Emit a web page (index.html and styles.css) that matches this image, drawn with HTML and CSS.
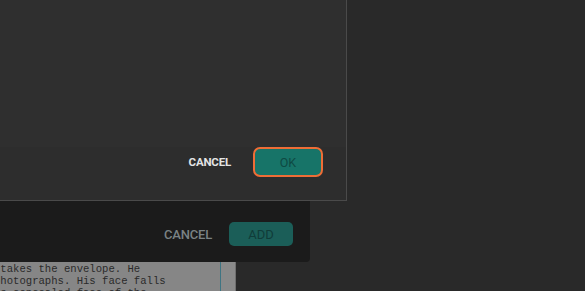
FILE: index.html
```html
<!DOCTYPE html>
<html>
<head>
<meta charset="utf-8">
<link rel="stylesheet" href="styles.css">
</head>
<body>
<div class="stage">
  <div class="back">
    <div class="panel">
      <div class="panel-actions">
        <span class="btn-text dim">CANCEL</span>
        <span class="btn-add">ADD</span>
      </div>
    </div>
    <div class="paper">
      <div class="paper-text">
        <div class="line"> takes the envelope. He</div>
        <div class="line">photographs. His face falls</div>
        <div class="line">as concealed face of the</div>
      </div>
      <div class="guide"></div>
      <div class="strip"></div>
    </div>
  </div>
  <div class="dialog">
    <div class="dialog-body"></div>
    <div class="dialog-actions">
      <span class="btn-text">CANCEL</span>
      <span class="btn-ok">OK</span>
    </div>
  </div>
</div>
</body>
</html>
```
FILE: styles.css
```css
html, body {
  margin: 0;
  padding: 0;
  background: #292929;
  width: 585px;
  height: 291px;
  overflow: hidden;
  font-family: Roboto, "Liberation Sans", sans-serif;
}
.stage {
  position: relative;
  width: 585px;
  height: 291px;
  overflow: hidden;
}
.back {
  display: flex;
  flex-direction: column;
}
.panel {
  width: 310px;
  height: 262px;
  background: #1b1b1b;
  border-bottom-right-radius: 4px;
  display: flex;
  flex-direction: column;
  justify-content: flex-end;
  box-sizing: border-box;
  padding: 0 17px 16px 0;
}
.panel-actions {
  display: flex;
  justify-content: flex-end;
  align-items: center;
  gap: 17px;
}
.btn-text {
  font-size: 11.5px;
  font-weight: 700;
  color: #e4e4e4;
  letter-spacing: -0.2px;
}
.btn-text.dim {
  font-size: 13px;
  font-weight: 500;
  color: #7a8284;
  letter-spacing: -0.2px;
}
.btn-add {
  width: 64px;
  height: 24px;
  border-radius: 5px;
  background: #1b5e58;
  color: #103c39;
  font-size: 13px;
  font-weight: 400;
  display: flex;
  align-items: center;
  justify-content: center;
}
.paper {
  width: 236px;
  height: 40px;
  background: #868686;
  display: flex;
  border-right: 1px solid #6f6f6f;
  box-sizing: border-box;
}
.paper-text {
  width: 220px;
  overflow: hidden;
  padding-top: 1px;
}
.line {
  font-family: "Liberation Mono", monospace;
  font-size: 10.6px;
  line-height: 12px;
  color: #2a2a2a;
  white-space: pre;
  margin-left: -6px;
}
.guide {
  width: 1px;
  background: #3e7482;
}
.strip {
  flex: 1;
  background: #8a8a8a;
}
.dialog {
  position: absolute;
  top: 0;
  left: 0;
  width: 347px;
  height: 201px;
  box-sizing: border-box;
  background: #2f2f2f;
  border-right: 1px solid #4a4a4a;
  border-bottom: 1px solid #4a4a4a;
  display: flex;
  flex-direction: column;
}
.dialog-body {
  flex: 1;
}
.dialog-actions {
  display: flex;
  justify-content: flex-end;
  align-items: center;
  gap: 22px;
  padding: 0 23px 23px 0;
  background: #2d2d2d;
}
.btn-ok {
  width: 66px;
  height: 26px;
  border: 2px solid #ef6d36;
  border-radius: 7px;
  background: #177468;
  color: #0e4a43;
  font-size: 12.5px;
  font-weight: 400;
  display: flex;
  align-items: center;
  justify-content: center;
}
```
